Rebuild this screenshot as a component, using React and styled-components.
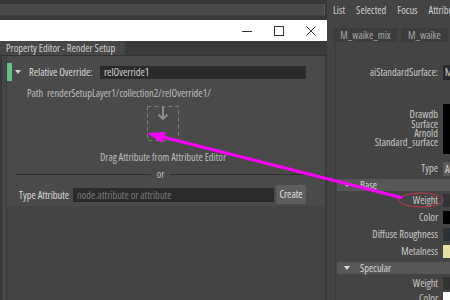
import React from "react";
import styled, { createGlobalStyle } from "styled-components";

const GlobalStyle = createGlobalStyle`
  html, body {
    margin: 0;
    padding: 0;
    background: #444;
  }
  body {
    font-family: "Open Sans", "Liberation Sans", Arial, sans-serif;
    font-stretch: 81%;
  }
`;

const Screen = styled.div`
  position: relative;
  width: 450px;
  height: 300px;
  overflow: hidden;
  display: flex;
  background: #444;
  color: #c8c8c8;
  font-size: 10.4px;
`;

// ---------- left: property editor window ----------
const LeftColumn = styled.div`
  width: 327px;
  flex-shrink: 0;
  display: flex;
  flex-direction: column;
`;

const BackStrip = styled.div`
  height: 20px;
  flex-shrink: 0;
  box-sizing: border-box;
  padding: 4px 2px 5px 0;
  background: #373737;
`;

const BackBar = styled.div`
  height: 100%;
  background: #4a4a4a;
  border-right: 1px solid #5c5c5c;
  border-bottom: 1px solid #404040;
`;

const TitleBar = styled.div`
  height: 21px;
  flex-shrink: 0;
  background: #fff;
  display: flex;
  justify-content: flex-end;
`;

const WinButton = styled.div`
  width: 32px;
  display: flex;
  align-items: center;
  justify-content: center;
`;

const TabStrip = styled.div`
  height: 14px;
  flex-shrink: 0;
  background: #3a3a3a;
  display: flex;
  border-bottom: 1px solid #333;
`;

const Tab = styled.div`
  width: 125px;
  background: #474747;
  padding-left: 6px;
  box-sizing: border-box;
  line-height: 14px;
  color: #d0d0d0;
  white-space: nowrap;
`;

const WindowBody = styled.div`
  flex: 1;
  display: flex;
  border-right: 2px solid #383838;
`;

const Rail = styled.div`
  width: 7px;
  box-sizing: border-box;
  background: #424242;
  border-left: 2px solid #383838;
  border-right: 1px solid #3c3c3c;
  box-shadow: inset -3px 0 0 #474747;
`;

const Main = styled.div`
  flex: 1;
  display: flex;
  flex-direction: column;
`;

const Content = styled.div`
  height: 150px;
  flex-shrink: 0;
  background: #4a4a4a;
  display: flex;
  flex-direction: column;
  padding-top: 7px;
  box-sizing: border-box;
`;

const Rest = styled.div`
  flex: 1;
  background: #444;
`;

const OverrideRow = styled.div`
  height: 18px;
  display: flex;
  align-items: center;
`;

const GreenBar = styled.div`
  width: 5px;
  height: 18px;
  background: #67c184;
`;

const Caret = styled.div`
  width: 0;
  height: 0;
  border-left: 3px solid transparent;
  border-right: 3px solid transparent;
  border-top: 4px solid ${(p) => p.color || "#cfcfcf"};
  margin-left: ${(p) => p.left || 0}px;
`;

const OverrideLabel = styled.div`
  width: 71px;
  margin-left: 8px;
  color: #d8d8d8;
  white-space: nowrap;
`;

const Field = styled.div`
  width: ${(p) => p.w}px;
  height: ${(p) => p.h || 13}px;
  line-height: ${(p) => p.h || 13}px;
  background: #2b2b2b;
  padding-left: 4px;
  box-sizing: border-box;
  color: ${(p) => (p.$placeholder ? "#7a7a7a" : "#d0d0d0")};
  white-space: nowrap;
  overflow: hidden;
`;

const PathRow = styled.div`
  height: 12px;
  line-height: 12px;
  margin-top: 6px;
  padding-left: 20px;
  color: #bdbdbd;
  white-space: nowrap;
`;

const DropArea = styled.div`
  display: flex;
  flex-direction: column;
  align-items: center;
  padding-right: 6px;
  margin-top: 7px;
`;

const DropText = styled.div`
  margin-top: 9px;
  height: 12px;
  line-height: 12px;
  color: #bdbdbd;
  white-space: nowrap;
`;

const Separator = styled.div`
  height: 10px;
  margin-top: 6px;
  padding: 0 20px 0 9px;
  display: flex;
  align-items: center;
  gap: 6px;
  color: #bdbdbd;
`;

const Rule = styled.div`
  flex: 1;
  height: 1px;
  background: #2f2f2f;
`;

const TypeRow = styled.div`
  height: 19px;
  margin-top: 6px;
  padding-left: 12px;
  display: flex;
  align-items: center;
  gap: 2px;
`;

const TypeLabel = styled.div`
  width: 52px;
  color: #d8d8d8;
  white-space: nowrap;
`;

const Button = styled.div`
  width: 30px;
  height: 19px;
  line-height: 19px;
  text-align: center;
  background: #5d5d5d;
  color: #e0e0e0;
  border-radius: 1px;
`;

// ---------- right: attribute editor ----------
const RightColumn = styled.div`
  flex: 1;
  display: flex;
  flex-direction: column;
  min-width: 0;
  overflow: hidden;
`;

const MenuBar = styled.div`
  height: 20px;
  flex-shrink: 0;
  display: flex;
  align-items: center;
  gap: 11px;
  padding-left: 6px;
  color: #cfcfcf;
  white-space: nowrap;
`;

const NodeTabs = styled.div`
  height: 14px;
  flex-shrink: 0;
  margin-top: 8px;
  padding-left: 6px;
  display: flex;
  gap: 3px;
`;

const NodeTab = styled.div`
  width: ${(p) => p.w}px;
  flex-shrink: 0;
  background: #3c3c3c;
  color: #a8a8a8;
  line-height: 14px;
  text-align: center;
  white-space: nowrap;
`;

const AttrBody = styled.div`
  flex: 1;
  min-height: 0;
  margin-left: 8px;
  border-left: 1px solid #3a3a3a;
  display: flex;
  flex-direction: column;
`;

const AttrRow = styled.div`
  height: ${(p) => p.h || 17}px;
  flex-shrink: 0;
  margin-top: ${(p) => p.top || 0}px;
  display: flex;
  align-items: center;
  gap: 5px;
`;

const AttrLabel = styled.div`
  width: 102px;
  flex-shrink: 0;
  text-align: right;
  color: #c8c8c8;
  white-space: nowrap;
  line-height: 9.4px;
`;

const Swatch = styled.div`
  width: 40px;
  flex-shrink: 0;
  height: ${(p) => p.h || 13}px;
  line-height: ${(p) => p.h || 13}px;
  background: ${(p) => p.bg};
  color: #d0d0d0;
  padding-left: 2px;
  box-sizing: border-box;
  overflow: hidden;
  white-space: nowrap;
`;

const FrameHeader = styled.div`
  height: 12px;
  flex-shrink: 0;
  margin-top: ${(p) => p.top || 0}px;
  margin-left: 1px;
  background: #575757;
  display: flex;
  align-items: center;
  color: #d4d4d4;
`;

const HeaderText = styled.span`
  margin-left: 10px;
`;

const Overlay = styled.svg`
  position: absolute;
  left: 0;
  top: 0;
  pointer-events: none;
`;

function DropIcon() {
  return (
    <svg width="33" height="36" viewBox="0 0 33 36">
      <rect x="0.5" y="0.5" width="31" height="34" fill="none" stroke="#7c7c7c" strokeDasharray="4 3" />
      <line x1="16" y1="1" x2="16" y2="13" stroke="#8c8c8c" strokeWidth="2" />
      <polyline points="11.5,8.5 16,13 20.5,8.5" fill="none" stroke="#8c8c8c" strokeWidth="2" />
    </svg>
  );
}

function WinIcons() {
  return (
    <>
      <WinButton>
        <svg width="10" height="10" viewBox="0 0 10 10">
          <line x1="0" y1="5.5" x2="10" y2="5.5" stroke="#333" strokeWidth="1" />
        </svg>
      </WinButton>
      <WinButton>
        <svg width="10" height="10" viewBox="0 0 10 10">
          <rect x="0.5" y="0.5" width="9" height="9" fill="none" stroke="#333" strokeWidth="1" />
        </svg>
      </WinButton>
      <WinButton>
        <svg width="10" height="10" viewBox="0 0 10 10">
          <path d="M0.5 0.5 L9.5 9.5 M9.5 0.5 L0.5 9.5" stroke="#333" strokeWidth="1" />
        </svg>
      </WinButton>
    </>
  );
}

const baseAttrs = [
  { label: "Weight", bg: "#333" },
  { label: "Color", bg: "#000" },
  { label: "Diffuse Roughness", bg: "#2c323a" },
  { label: "Metalness", bg: "#e6e0a3" },
];

const specularAttrs = [
  { label: "Weight", bg: "#333" },
  { label: "Color", bg: "#fff" },
];

export default function App() {
  return (
    <>
      <GlobalStyle />
      <Screen>
        <LeftColumn>
          <BackStrip>
            <BackBar />
          </BackStrip>
          <TitleBar>
            <WinIcons />
          </TitleBar>
          <TabStrip>
            <Tab>Property Editor - Render Setup</Tab>
          </TabStrip>
          <WindowBody>
            <Rail />
            <Main>
              <Content>
                <OverrideRow>
                  <GreenBar />
                  <Caret left={3} />
                  <OverrideLabel>Relative Override:</OverrideLabel>
                  <Field w={206}>relOverride1</Field>
                </OverrideRow>
                <PathRow>Path&nbsp; renderSetupLayer1/collection2/relOverride1/</PathRow>
                <DropArea>
                  <DropIcon />
                  <DropText>Drag Attribute from Attribute Editor</DropText>
                </DropArea>
                <Separator>
                  <Rule />
                  or
                  <Rule />
                </Separator>
                <TypeRow>
                  <TypeLabel>Type Attribute</TypeLabel>
                  <Field w={201} h={14} $placeholder>
                    node.attribute or attribute
                  </Field>
                  <Button>Create</Button>
                </TypeRow>
              </Content>
              <Rest />
            </Main>
          </WindowBody>
        </LeftColumn>

        <RightColumn>
          <MenuBar>
            <span>List</span>
            <span>Selected</span>
            <span>Focus</span>
            <span>Attributes</span>
          </MenuBar>
          <NodeTabs>
            <NodeTab w={65}>M_waike_mix</NodeTab>
            <NodeTab w={47}>M_waike</NodeTab>
          </NodeTabs>
          <AttrBody>
            <AttrRow h={15} top={23}>
              <AttrLabel>aiStandardSurface:</AttrLabel>
              <Swatch bg="#2b2b2b" h={15}>M_waike</Swatch>
            </AttrRow>
            <AttrRow h={52} top={23}>
              <AttrLabel>
                Drawdb
                <br />
                Surface
                <br />
                Arnold
                <br />
                Standard_surface
              </AttrLabel>
              <Swatch bg="#000" h={50} />
            </AttrRow>
            <AttrRow h={14} top={7}>
              <AttrLabel>Type</AttrLabel>
              <Swatch bg="#5a5a5a" h={14}>Arnold</Swatch>
            </AttrRow>
            <FrameHeader top={3}>
              <Caret left={7} color="#dcdcdc" />
              <HeaderText>Base</HeaderText>
            </FrameHeader>
            {baseAttrs.map((a, i) => (
              <AttrRow key={a.label} top={i === 0 ? 1 : 0}>
                <AttrLabel>{a.label}</AttrLabel>
                <Swatch bg={a.bg} />
              </AttrRow>
            ))}
            <FrameHeader top={2}>
              <Caret left={7} color="#dcdcdc" />
              <HeaderText>Specular</HeaderText>
            </FrameHeader>
            {specularAttrs.map((a, i) => (
              <AttrRow key={a.label} top={i === 0 ? 2 : 0} h={15}>
                <AttrLabel>{a.label}</AttrLabel>
                <Swatch bg={a.bg} />
              </AttrRow>
            ))}
          </AttrBody>
        </RightColumn>

        <Overlay width="450" height="300" viewBox="0 0 450 300">
          <ellipse cx="421" cy="200" rx="22" ry="7" fill="none" stroke="#c23a4a" strokeWidth="1" />
          <line x1="160" y1="136.3" x2="401" y2="197.5" stroke="#ff00ff" strokeWidth="3" strokeLinecap="round" />
          <polygon points="147,133 165.5,132 162,143" fill="#ff00ff" />
        </Overlay>
      </Screen>
    </>
  );
}
